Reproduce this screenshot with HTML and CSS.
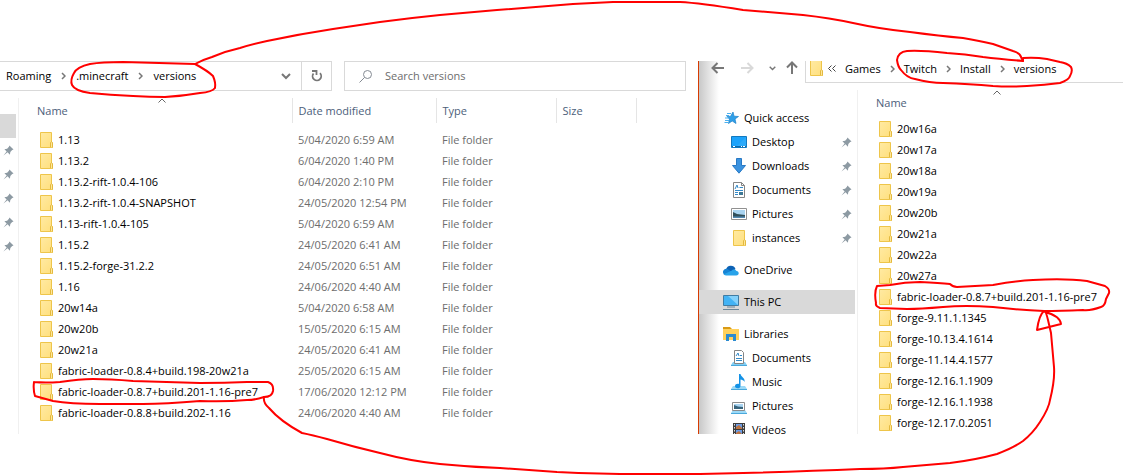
FILE: index.html
```html
<!DOCTYPE html>
<html lang="en">
<head>
    <meta charset="UTF-8">
    <meta name="viewport" content="width=device-width, initial-scale=1.0">
    <title>versions</title>
    <link rel="stylesheet" href="styles.css">
</head>
<body>
    <!-- shared icons -->
    <svg class="defs" aria-hidden="true">
        <linearGradient id="folderFill" x1="0" y1="0" x2="1" y2="1">
            <stop offset="0" stop-color="#ffeaa3"/>
            <stop offset="1" stop-color="#ffdf7c"/>
        </linearGradient>
        <symbol id="folder" viewBox="0 0 13 16">
            <path d="M.5.5h11v9.500l1 1v4.500H.5z" fill="url(#folderFill)" stroke="#eec54a"/>
            <path d="M10.500 15V10.500l1-1 1 1.500v4.500" fill="#ffe79a" stroke="#e3b93f"/>
        </symbol>
        <symbol id="pin" viewBox="0 0 12 12">
            <path d="M7 .5 11.500 5 10 5.500 8 7.500 7.500 10.500 5 8 .5 11.500 4 7 1.500 4.500 4.500 4 6.500 2z" fill="#8d9aa3"/>
        </symbol>
        <symbol id="sep" viewBox="0 0 5 8">
            <path d="M1 1l3 3-3 3" fill="none" stroke="#777" stroke-width="1.500"/>
        </symbol>
        <symbol id="chevron" viewBox="0 0 10 7">
            <path d="M1 1l4 4 4-4" fill="none" stroke="#777" stroke-width="2"/>
        </symbol>
        <symbol id="caret" viewBox="0 0 8 5">
            <path d="M.5 4.500 4 1l3.500 3.500" fill="none" stroke="#666"/>
        </symbol>
        <symbol id="arrow" viewBox="0 0 14 12">
            <path d="M13 6H2M6.500 1 1.500 6l5 5" fill="none" stroke="currentColor" stroke-width="2"/>
        </symbol>
    </svg>

    <main class="desktop">
        <section class="window" aria-label="Roaming versions">
            <div class="toolbar">
                <div class="address">
                    <nav class="crumbs">
                        <a href="#">Roaming</a>
                        <svg class="sep"><use href="#sep"/></svg>
                        <a href="#">.minecraft</a>
                        <svg class="sep"><use href="#sep"/></svg>
                        <a href="#">versions</a>
                    </nav>
                    <button class="history" aria-label="Previous locations"><svg class="chevron"><use href="#chevron"/></svg></button>
                    <button class="refresh" aria-label="Refresh">
                        <svg width="12" height="12" viewBox="0 0 12 12"><path d="M2.500 3.500A4.300 4.300 0 1 0 9 3.200M1 1h4.500v4" fill="none" stroke="#777" stroke-width="1.800"/></svg>
                    </button>
                </div>
                <label class="search">
                    <svg width="13" height="13" viewBox="0 0 13 13"><circle cx="8.500" cy="4.500" r="4" fill="none" stroke="#858b93"/><path d="M5.500 7.500.5 12.500" stroke="#858b93"/></svg>
                    <input type="text" placeholder="Search versions" aria-label="Search versions">
                </label>
            </div>

            <div class="content">
                <nav class="strip" aria-label="Pinned">
                    <div class="selected"></div>
                    <div><svg class="pin"><use href="#pin"/></svg></div>
                    <div><svg class="pin"><use href="#pin"/></svg></div>
                    <div><svg class="pin"><use href="#pin"/></svg></div>
                    <div><svg class="pin"><use href="#pin"/></svg></div>
                    <div><svg class="pin"><use href="#pin"/></svg></div>
                </nav>
                <table class="files details">
                    <colgroup><col class="col-name"><col class="col-date"><col class="col-type"><col class="col-size"></colgroup>
                    <thead>
                        <tr>
                            <th>Name<svg class="caret"><use href="#caret"/></svg></th>
                            <th>Date modified</th>
                            <th>Type</th>
                            <th>Size</th>
                        </tr>
                    </thead>
                    <tbody>
                        <tr><td><a href="#"><svg class="folder"><use href="#folder"/></svg>1.13</a></td><td>5/04/2020 6:59 AM</td><td>File folder</td><td></td></tr>
                        <tr><td><a href="#"><svg class="folder"><use href="#folder"/></svg>1.13.2</a></td><td>6/04/2020 1:40 PM</td><td>File folder</td><td></td></tr>
                        <tr><td><a href="#"><svg class="folder"><use href="#folder"/></svg>1.13.2-rift-1.0.4-106</a></td><td>6/04/2020 2:10 PM</td><td>File folder</td><td></td></tr>
                        <tr><td><a href="#"><svg class="folder"><use href="#folder"/></svg>1.13.2-rift-1.0.4-SNAPSHOT</a></td><td>24/05/2020 12:54 PM</td><td>File folder</td><td></td></tr>
                        <tr><td><a href="#"><svg class="folder"><use href="#folder"/></svg>1.13-rift-1.0.4-105</a></td><td>5/04/2020 6:59 AM</td><td>File folder</td><td></td></tr>
                        <tr><td><a href="#"><svg class="folder"><use href="#folder"/></svg>1.15.2</a></td><td>24/05/2020 6:41 AM</td><td>File folder</td><td></td></tr>
                        <tr><td><a href="#"><svg class="folder"><use href="#folder"/></svg>1.15.2-forge-31.2.2</a></td><td>24/05/2020 6:51 AM</td><td>File folder</td><td></td></tr>
                        <tr><td><a href="#"><svg class="folder"><use href="#folder"/></svg>1.16</a></td><td>24/06/2020 4:40 AM</td><td>File folder</td><td></td></tr>
                        <tr><td><a href="#"><svg class="folder"><use href="#folder"/></svg>20w14a</a></td><td>5/04/2020 6:58 AM</td><td>File folder</td><td></td></tr>
                        <tr><td><a href="#"><svg class="folder"><use href="#folder"/></svg>20w20b</a></td><td>15/05/2020 6:15 AM</td><td>File folder</td><td></td></tr>
                        <tr><td><a href="#"><svg class="folder"><use href="#folder"/></svg>20w21a</a></td><td>24/05/2020 6:41 AM</td><td>File folder</td><td></td></tr>
                        <tr><td><a href="#"><svg class="folder"><use href="#folder"/></svg>fabric-loader-0.8.4+build.198-20w21a</a></td><td>25/05/2020 6:15 AM</td><td>File folder</td><td></td></tr>
                        <tr><td><a href="#"><svg class="folder"><use href="#folder"/></svg>fabric-loader-0.8.7+build.201-1.16-pre7</a></td><td>17/06/2020 12:12 PM</td><td>File folder</td><td></td></tr>
                        <tr><td><a href="#"><svg class="folder"><use href="#folder"/></svg>fabric-loader-0.8.8+build.202-1.16</a></td><td>24/06/2020 4:40 AM</td><td>File folder</td><td></td></tr>
                    </tbody>
                </table>
            </div>
        </section>

        <section class="window front" aria-label="Twitch versions">
            <div class="toolbar">
                <div class="nav-buttons">
                    <button aria-label="Back"><svg class="arrow"><use href="#arrow"/></svg></button>
                    <button class="forward" aria-label="Forward" disabled><svg class="arrow"><use href="#arrow"/></svg></button>
                    <button aria-label="Recent locations"><svg class="chevron small"><use href="#chevron"/></svg></button>
                    <button class="up" aria-label="Up"><svg class="arrow"><use href="#arrow"/></svg></button>
                </div>
                <div class="address">
                    <nav class="crumbs">
                        <svg class="folder"><use href="#folder"/></svg>
                        <svg class="more" width="8" height="7" viewBox="0 0 8 7"><path d="M3.500.5l-3 3 3 3M7.500.5l-3 3 3 3" fill="none" stroke="#444"/></svg>
                        <a href="#">Games</a>
                        <svg class="sep"><use href="#sep"/></svg>
                        <a href="#">Twitch</a>
                        <svg class="sep"><use href="#sep"/></svg>
                        <a href="#">Install</a>
                        <svg class="sep"><use href="#sep"/></svg>
                        <a href="#">versions</a>
                    </nav>
                </div>
            </div>

            <div class="content">
                <nav class="tree" aria-label="Folders">
                    <ul>
                        <li><a href="#">
                            <svg class="icon" viewBox="0 0 16 16"><path d="M10 2 11 6.200l4.500.3L12 9l1 4.500-3.800-2.500L5.500 13.500l1-4.500L4 6.500l3.700-.3z" fill="#2f9fe8" stroke="#1b7fc9" stroke-width=".7"/><path d="M4 3.500h4M3 5.500h3M2 8h4M2 10.500h4M1.500 12.500h4" stroke="#4bb0ef"/></svg>
                            Quick access</a></li>
                        <li class="child"><a href="#">
                            <svg class="icon" viewBox="0 0 16 16"><path d="M.5 2.500h15v11H.5z" fill="#1ca3fb" stroke="#1279bf"/><path d="M1 12.500h14" stroke="#0c6aad"/><path d="M2 12.500h2m6 0h1m1 0h2" stroke="#fff"/><path d="M15 3v9H6z" fill="#45b4fb" opacity=".4"/></svg>
                            Desktop</a><svg class="pin"><use href="#pin"/></svg></li>
                        <li class="child"><a href="#">
                            <svg class="icon" viewBox="0 0 16 16"><path d="M5.500.5h5v7h4L8 15.200 1.500 7.500h4z" fill="#3b93e0" stroke="#2879c4"/></svg>
                            Downloads</a><svg class="pin"><use href="#pin"/></svg></li>
                        <li class="child"><a href="#">
                            <svg class="icon" viewBox="0 0 16 16"><path d="M2.500.5h8l3 3v12h-11z" fill="#fff" stroke="#858585"/><path d="M10.500.5v3h3" fill="none" stroke="#858585"/><path d="m4 7 2-4 1 3M8.500 5.500H12M4 8.500h8M4 10.500h3M4 12.500h3" fill="none" stroke="#348ac8"/><path d="M8 10h4v3H8z" fill="#3e7895"/></svg>
                            Documents</a><svg class="pin"><use href="#pin"/></svg></li>
                        <li class="child"><a href="#">
                            <svg class="icon" viewBox="0 0 16 16"><path d="M.5 2.500h15v11H.5z" fill="#fff" stroke="#919191"/><path d="M2 4h12v8H2z" fill="#a9d4f1"/><path d="m2 6 4 2 8 1v2H2z" fill="#31505b"/><path d="M2 10.500h12V12H2z" fill="#5389b2"/></svg>
                            Pictures</a><svg class="pin"><use href="#pin"/></svg></li>
                        <li class="child"><a href="#">
                            <svg class="icon" viewBox="-2 0 16 16"><use href="#folder" width="13" height="16"/></svg>
                            instances</a><svg class="pin"><use href="#pin"/></svg></li>
                    </ul>
                    <ul>
                        <li><a href="#">
                            <svg class="icon" viewBox="0 0 16 16"><path d="M3 7.500A5 5 0 0 1 12.500 7L8 11z" fill="#0d62b5"/><path d="M0 10.500A3.300 3.300 0 0 1 4.500 7l6 4-8 2A2.600 2.600 0 0 1 0 10.500z" fill="#1683d4"/><path d="M8.500 8.700c1.500-2 4.300-1.500 5 .3 3 .3 3 4.500-.3 4.500H3C1.800 13.500 1 13 .7 12.300z" fill="#28a3ea"/></svg>
                            OneDrive</a></li>
                    </ul>
                    <ul>
                        <li class="selected"><a href="#">
                            <svg class="icon" viewBox="0 0 16 16"><path d="M.5 1.500h15v10H.5z" fill="#42b3f5" stroke="#417ca3"/><path d="M15 2v9L5 2z" fill="#84d1fb"/><path d="M4 13h8M0 15.500h16" stroke="#6c8799"/></svg>
                            This PC</a></li>
                    </ul>
                    <ul>
                        <li><a href="#">
                            <svg class="icon" viewBox="0 0 16 16"><path d="M0 1h7l2 2H0z" fill="#d99a15"/><path d="M0 3h16v11H0z" fill="#ffd15c"/><path d="M3 15V8h10v7h-3v-4H6v4z" fill="#2b8bd0"/></svg>
                            Libraries</a></li>
                        <li class="child"><a href="#">
                            <svg class="icon" viewBox="0 0 16 16"><path d="m2 12-2 3h16l-2-3z" fill="#80cef5"/><path d="M3.500.5h7l2 2v11h-9z" fill="#fff" stroke="#858585"/><path d="m5 6 2-3 1 3M5 8.500h6M5 10.500h6M9 5.500h2" fill="none" stroke="#348ac8"/><path d="M0 15.500h16" stroke="#4aa9dc"/></svg>
                            Documents</a></li>
                        <li class="child"><a href="#">
                            <svg class="icon" viewBox="0 0 16 16"><path d="m2 12-2 3h16l-2-3z" fill="#9bd9f7"/><path d="M0 15.500h16" stroke="#4aa9dc"/><path d="M8 0h1.500c.5 3 5 4 4 8-.8-2-2.500-2-4-2.500V12c0 3-5.500 3-5.500.3C4 10 6.500 9.500 8 10z" fill="#1492e6"/></svg>
                            Music</a></li>
                        <li class="child"><a href="#">
                            <svg class="icon" viewBox="0 0 16 16"><path d="m2 12-2 3h16l-2-3z" fill="#9bd9f7"/><path d="M0 15.500h16" stroke="#4aa9dc"/><path d="M1.500 4.500h12v8h-12z" fill="#fff" stroke="#8b8b8b"/><path d="M3 6h9v5H3z" fill="#a9d4f1"/><path d="m3 7 4 1.500 5 .5v2H3z" fill="#38647c"/></svg>
                            Pictures</a></li>
                        <li class="child"><a href="#">
                            <svg class="icon" viewBox="0 0 16 16"><path d="M2 1h12v14H2z" fill="#3c3c3c"/><path d="M5 2h6v5H5zM5 8h6v5H5z" fill="#6d9ce3"/><path d="m5 5 3-2 3 3v1H5zM5 11l3-2 3 3v1H5z" fill="#bf7440"/><path d="M3.500 2v12M12.500 2v12" stroke="#ddd" stroke-dasharray="1.500 1.500"/></svg>
                            Videos</a></li>
                    </ul>
                </nav>
                <table class="files">
                    <thead>
                        <tr><th>Name<svg class="caret"><use href="#caret"/></svg></th></tr>
                    </thead>
                    <tbody>
                        <tr><td><a href="#"><svg class="folder"><use href="#folder"/></svg>20w16a</a></td></tr>
                        <tr><td><a href="#"><svg class="folder"><use href="#folder"/></svg>20w17a</a></td></tr>
                        <tr><td><a href="#"><svg class="folder"><use href="#folder"/></svg>20w18a</a></td></tr>
                        <tr><td><a href="#"><svg class="folder"><use href="#folder"/></svg>20w19a</a></td></tr>
                        <tr><td><a href="#"><svg class="folder"><use href="#folder"/></svg>20w20b</a></td></tr>
                        <tr><td><a href="#"><svg class="folder"><use href="#folder"/></svg>20w21a</a></td></tr>
                        <tr><td><a href="#"><svg class="folder"><use href="#folder"/></svg>20w22a</a></td></tr>
                        <tr><td><a href="#"><svg class="folder"><use href="#folder"/></svg>20w27a</a></td></tr>
                        <tr><td><a href="#"><svg class="folder"><use href="#folder"/></svg>fabric-loader-0.8.7+build.201-1.16-pre7</a></td></tr>
                        <tr><td><a href="#"><svg class="folder"><use href="#folder"/></svg>forge-9.11.1.1345</a></td></tr>
                        <tr><td><a href="#"><svg class="folder"><use href="#folder"/></svg>forge-10.13.4.1614</a></td></tr>
                        <tr><td><a href="#"><svg class="folder"><use href="#folder"/></svg>forge-11.14.4.1577</a></td></tr>
                        <tr><td><a href="#"><svg class="folder"><use href="#folder"/></svg>forge-12.16.1.1909</a></td></tr>
                        <tr><td><a href="#"><svg class="folder"><use href="#folder"/></svg>forge-12.16.1.1938</a></td></tr>
                        <tr><td><a href="#"><svg class="folder"><use href="#folder"/></svg>forge-12.17.0.2051</a></td></tr>
                    </tbody>
                </table>
            </div>
        </section>

        <!-- red pen marks -->
        <svg class="marks" viewBox="0 0 1123 475" preserveAspectRatio="none" aria-hidden="true">
            <path d="M195 64Q160 63 123 62Q102 62 90 64Q77 67 74 73Q70 80 72 85Q75 91 90 93Q110 95 133 96Q150 97 165 97Q183 96 200 93Q212 92 215 88Q216 83 213 76Q208 71 195 64"/>
            <path d="M195 64Q202 60 212 57Q226 51 240 48Q253 44 267 41Q300 34 333 29L380 22Q410 18 440 15L497 10L573 4Q593 3 613 2H680Q700 3 743 10L803 15Q830 18 853 23Q880 29 910 32Q940 36 963 38Q980 41 993 44L1013 51Q1020 53 1021 57L1023 61"/>
            <path d="M1023 61Q1000 59 983 57Q965 54 947 53Q920 50 907 51Q898 52 897 60Q898 67 901 70Q907 78 915 79Q930 83 943 83Q970 84 993 86Q1010 87 1027 86Q1045 85 1060 83Q1069 80 1070 76Q1073 71 1071 67Q1067 63 1060 62L1047 59Q1035 57 1023 58V61"/>
            <path d="M34 382Q45 383 60 382Q80 379 93 379Q110 379 133 381Q165 382 200 383Q225 383 247 382H268Q274 384 273 391Q272 397 264 397Q255 400 247 400Q225 402 200 401Q165 404 143 404Q120 404 100 404Q70 404 53 401L35 396Q33 390 34 382"/>
            <path d="M264 397Q263 403 269 408Q280 421 302 433Q312 435 327 439Q354 447 380 453Q410 461 440 464Q470 467 500 468L557 472Q600 474 640 474H700Q790 472 860 469Q885 469 903 467L950 463Q975 460 997 454Q1013 448 1023 441Q1033 433 1040 422Q1049 408 1050 400Q1055 380 1054 367Q1052 345 1051 333L1048 320Q1046 311 1044 311Q1039 315 1037 330Q1049 327 1061 324Q1060 316 1045 312"/>
            <path d="M877 286L890 285Q905 282 920 282Q940 283 950 284Q953 287 957 287L993 285Q1015 281 1033 280Q1065 278 1087 281L1105 286Q1110 289 1109 293L1106 299Q1105 306 1101 307Q1090 311 1083 310Q1060 311 1044 311Q1020 310 993 307Q965 305 943 307Q920 309 907 309L880 308Q875 306 876 303Q874 292 877 286"/>
        </svg>
    </main>
</body>
</html>
```
FILE: styles.css
```css
* {
    margin: 0;
    padding: 0;
    box-sizing: border-box;
}

body {
    font-family: "Segoe UI", "Open Sans", sans-serif;
    font-size: 11px;
    line-height: 16px;
    background: #fff;
    color: #000;
}

a {
    color: inherit;
    text-decoration: none;
}

button {
    border: none;
    background: none;
    cursor: pointer;
}

ul {
    list-style: none;
}

svg {
    display: block;
    flex: none;
}

.defs {
    position: absolute;
    width: 0;
    height: 0;
}

.desktop {
    position: relative;
    display: grid;
    grid-template-columns: 698fr 425fr;
    height: 100vh;
    padding: 61px 0 41px;
    overflow: hidden;
}

.window {
    display: flex;
    flex-direction: column;
    min-width: 0;
    min-height: 0;
    overflow: hidden;
}

.front {
    border-left: 1px solid #d83b01;
    background: linear-gradient(to right, #c8c8c8, #fff 20px);
}

/* toolbar */
.toolbar {
    display: flex;
    gap: 12px;
    height: 30px;
    padding-right: 12px;
    margin-bottom: 7px;
}

.front .toolbar {
    gap: 6px;
    height: 22px;
    padding-right: 0;
}

.address {
    display: flex;
    flex: 0 0 332px;
    border: 1px solid #d9d9d9;
    border-left: none;
}

.front .address {
    flex: 1;
    border: 1px solid #d9d9d9;
    border-width: 0 0 1px 1px;
}

.crumbs {
    display: flex;
    flex: 1;
    align-items: center;
    gap: 10px;
    padding-left: 6px;
}

.front .crumbs {
    align-items: flex-start;
    gap: 9px;
    padding-left: 4px;
}

.front .crumbs .sep,
.front .crumbs .more {
    margin-top: 4px;
}

.front .crumbs .folder {
    margin: -1px -4px 0 0;
}

.history,
.refresh {
    display: flex;
    align-items: center;
    justify-content: center;
    width: 30px;
}

.refresh {
    border-left: 1px solid #d9d9d9;
}

.search {
    display: flex;
    flex: 1;
    align-items: center;
    gap: 13px;
    padding: 0 14px;
    border: 1px solid #d9d9d9;
}

.search input {
    flex: 1;
    min-width: 0;
    border: none;
    outline: none;
    font: inherit;
}

.search input::placeholder {
    color: #6d6d6d;
}

.nav-buttons {
    display: flex;
    align-items: flex-start;
    gap: 15px;
    width: 100px;
    padding: 0 0 0 12px;
    color: #777;
}

.nav-buttons button {
    display: flex;
    align-items: center;
    height: 14px;
    color: inherit;
}

.nav-buttons .forward {
    color: #d9d9d9;
    transform: scaleX(-1);
}

.nav-buttons .up {
    transform: rotate(90deg);
    margin-left: -6px;
}

/* icons */
.folder {
    width: 13px;
    height: 16px;
}

.pin {
    width: 11px;
    height: 11px;
}

.sep {
    width: 5px;
    height: 8px;
}

.chevron {
    width: 10px;
    height: 7px;
}

.chevron.small {
    width: 7px;
    height: 5px;
}

.arrow {
    width: 14px;
    height: 12px;
}

.icon {
    width: 16px;
    height: 16px;
}

/* side panes */
.content {
    display: flex;
    flex: 1;
    align-items: stretch;
    min-height: 0;
}

.strip {
    flex: 0 0 19px;
    padding: 16px 2px 0 0;
    border-right: 1px solid #f0f0f0;
}

.strip div {
    display: flex;
    align-items: center;
    height: 24px;
    padding-left: 3px;
}

.selected {
    background: #d9d9d9;
}

.tree {
    display: flex;
    flex: 0 0 159px;
    flex-direction: column;
    gap: 8px;
    padding: 16px 2px 0 0;
    border-right: 1px solid #f0f0f0;
}

.tree li {
    display: flex;
    align-items: center;
    justify-content: space-between;
    height: 24px;
    padding: 0 3px 0 24px;
}

.tree .child {
    padding-left: 32px;
}

.tree a {
    display: flex;
    align-items: center;
    gap: 5px;
}

/* file lists */
.files {
    flex: 1;
    align-self: flex-start;
    table-layout: fixed;
    border-collapse: collapse;
    white-space: nowrap;
}

.files.details {
    flex: 0 0 617px;
    width: 617px;
}

.front .files {
    background: #fff;
}

.col-name {
    width: 273px;
}

.col-date {
    width: 144px;
}

.col-type {
    width: 120px;
}

.col-size {
    width: 80px;
}

.files th {
    position: relative;
    height: 25px;
    padding-left: 6px;
    border-right: 1px solid #e5e5e5;
    color: #4c607a;
    font-weight: normal;
    text-align: left;
}

.front .files th {
    border-right: none;
}

.files th:first-child {
    padding-left: 18px;
}

.files tbody::before {
    content: "";
    display: block;
    height: 6px;
}

.front .files tbody::before {
    height: 3px;
}

.files td {
    height: 21px;
    padding-left: 6px;
    color: #6d6d6d;
}

.files td:first-child {
    padding-left: 21px;
    color: #000;
}

.files td a {
    display: flex;
    align-items: center;
    gap: 5px;
}

.caret {
    position: absolute;
    top: 0;
    left: 51%;
    width: 8px;
    height: 5px;
}

/* pen marks over both windows */
.marks {
    position: absolute;
    inset: 0;
    width: 100%;
    height: 100%;
    pointer-events: none;
}

.marks path {
    fill: none;
    stroke: #f00;
    stroke-width: 2;
    stroke-linejoin: round;
    stroke-linecap: round;
    vector-effect: non-scaling-stroke;
}
```
